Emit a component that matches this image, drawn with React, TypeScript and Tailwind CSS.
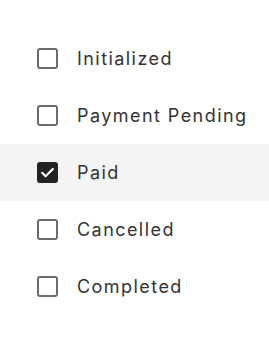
import React from "react";

const items = [
  { label: "Initialized", checked: false },
  { label: "Payment Pending", checked: false },
  { label: "Paid", checked: true },
  { label: "Cancelled", checked: false },
  { label: "Completed", checked: false },
];

export default function App() {
  return (
    <div
      className="w-[269px] h-[340px] bg-white pt-[30px]"
      style={{ fontFamily: "Inter, 'Noto Sans', sans-serif" }}
    >
      <ul className="flex flex-col">
        {items.map((it) => (
          <li
            key={it.label}
            className={`flex items-center h-[57px] pl-[37px] ${it.checked ? "bg-[#f4f4f4]" : ""}`}
          >
            {it.checked ? (
              <span className="w-[21px] h-[21px] rounded-[3px] bg-[#222222] flex items-center justify-center">
                <svg width="17" height="17" viewBox="0 0 24 24" fill="none">
                  <path d="M4.5 12.5l4.8 4.8L19.5 7" stroke="white" strokeWidth="3" strokeLinecap="round" strokeLinejoin="round" />
                </svg>
              </span>
            ) : (
              <span className="w-[21px] h-[21px] rounded-[3px] border-2 border-[#6b6b6b] bg-white" />
            )}
            <span className="ml-[19px] text-[18px] tracking-[0.08em] text-[#333333] leading-none">{it.label}</span>
          </li>
        ))}
      </ul>
    </div>
  );
}
